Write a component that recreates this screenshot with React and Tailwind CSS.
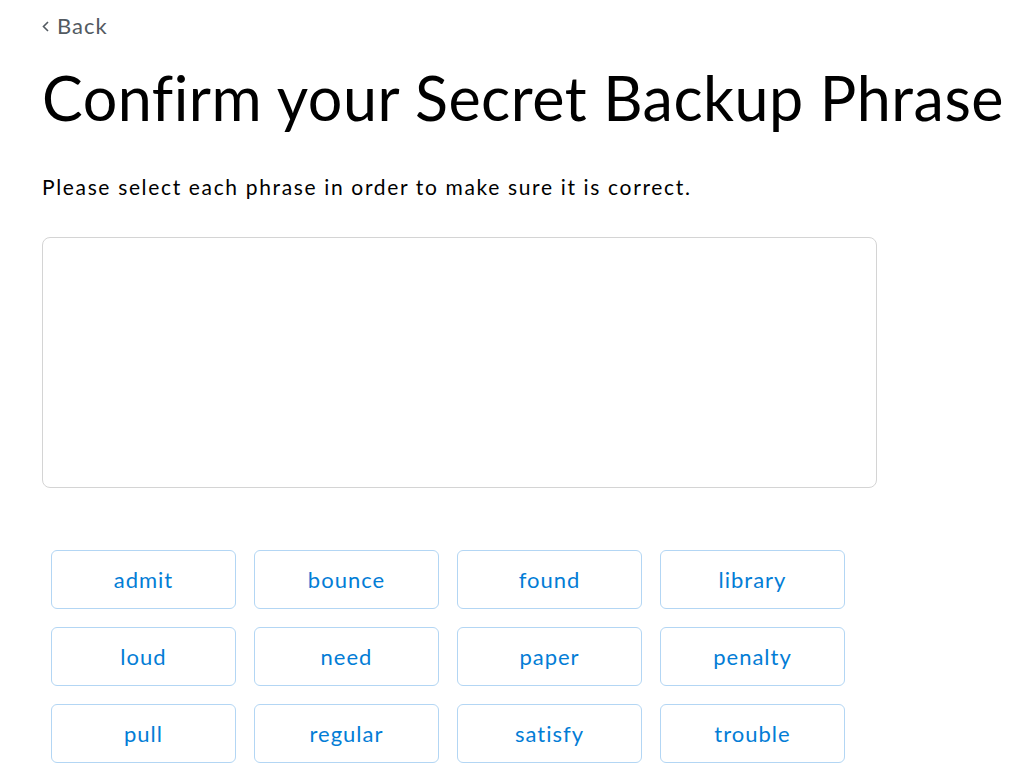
import React from 'react';

const words = [
  'admit', 'bounce', 'found', 'library',
  'loud', 'need', 'paper', 'penalty',
  'pull', 'regular', 'satisfy', 'trouble',
];

const App = () => {
  return (
    <div className="min-h-screen bg-white pl-[42px] font-['Lato',sans-serif]">
      <div className="pt-[10px] h-[40px] flex items-center gap-[8px] text-[22px] tracking-[1px] text-[#535a61]">
        <svg width="7" height="11" viewBox="0 0 7 11" fill="none" className="mt-[2px]">
          <path d="M6 1L1.5 5.5L6 10" stroke="#535a61" strokeWidth="1.6" />
        </svg>
        <span>Back</span>
      </div>
      <h1 className="mt-[22px] text-[61px] leading-[72px] text-black tracking-[0.5px] whitespace-nowrap">
        Confirm your Secret Backup Phrase
      </h1>
      <p className="mt-[40px] text-[21px] leading-[26px] tracking-[1.65px] text-black">
        Please select each phrase in order to make sure it is correct.
      </p>
      <div className="mt-[37px] w-[835px] h-[251px] border border-[#d4d4d4] rounded-[8px]"></div>
      {/* word buttons */}
      <div className="mt-[62px] ml-[9px] grid grid-cols-[repeat(4,185px)] gap-[18px]">
        {words.map(w => (
          <button
            key={w}
            className="h-[59px] border border-[#b3d6f4] rounded-[6px] bg-white text-[22px] tracking-[1px] text-[#037dd6] flex items-center justify-center"
          >
            {w}
          </button>
        ))}
      </div>
    </div>
  );
};

export default App;
